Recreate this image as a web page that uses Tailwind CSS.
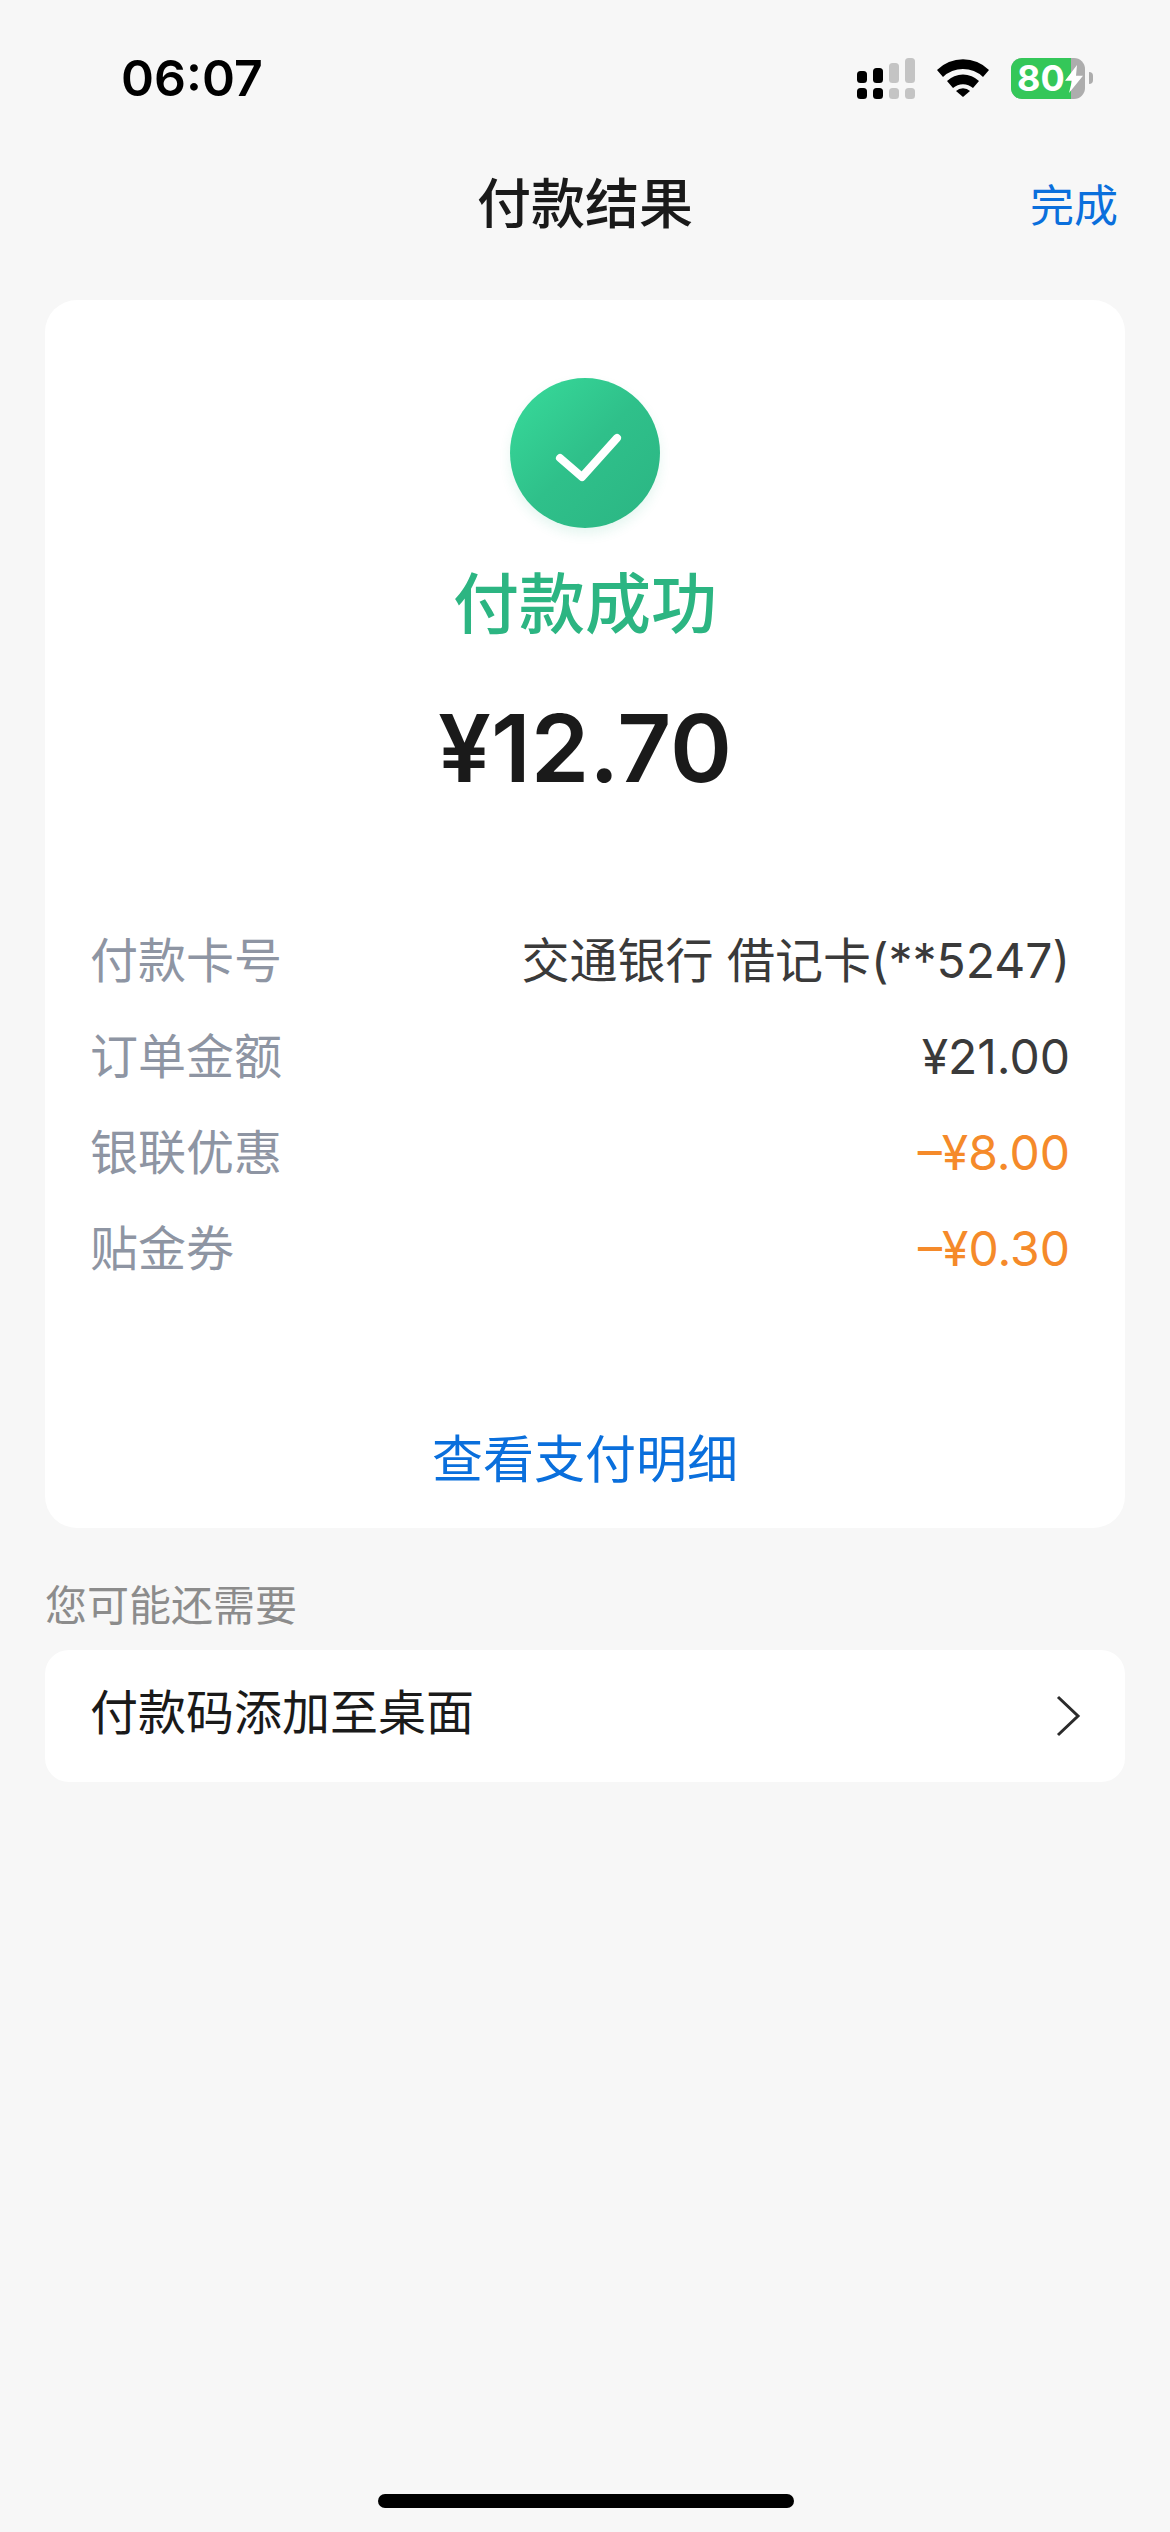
<!DOCTYPE html>
<html lang="zh-CN">
<head>
  <meta charset="UTF-8" />
  <meta name="viewport" content="width=device-width, initial-scale=1.0" />
  <title>付款结果</title>
  <script src="https://cdn.jsdelivr.net/npm/@tailwindcss/browser@4"></script>
</head>
<body class="bg-[#f7f7f7] font-['Inter','Noto_Sans_CJK_SC',sans-serif]">
  <div class="relative w-[1170px] h-[2532px] overflow-hidden">

    <!-- status bar -->
    <div class="h-[156px] pl-[121px] pr-[77px] flex justify-between items-center">
      <span class="text-[50px] leading-[66px] font-semibold text-black">06:07</span>
      <div class="flex items-center gap-[22px]">
        <svg width="58" height="41" viewBox="0 0 58 41" class="block">
          <g fill="#000">
            <rect x="0" y="13" width="10" height="12" rx="3.5" /><rect x="16" y="10" width="10" height="15" rx="3.5" />
            <rect x="0" y="30" width="10" height="11" rx="3.5" /><rect x="16" y="30" width="10" height="11" rx="3.5" />
          </g>
          <g fill="#c4c4c4">
            <rect x="32" y="5" width="10" height="20" rx="3.5" /><rect x="48" y="0" width="10" height="25" rx="3.5" />
            <rect x="32" y="30" width="10" height="11" rx="3.5" /><rect x="48" y="30" width="10" height="11" rx="3.5" />
          </g>
        </svg>
        <svg width="52" height="38" viewBox="0 0 52 38" class="block">
          <path d="M0 11 A37 37 0 0 1 52 11 L46 18 A29 29 0 0 0 6 18 Z" fill="#000" />
          <path d="M10 22 A23 23 0 0 1 42 22 L36 29 A15 15 0 0 0 16 29 Z" fill="#000" />
          <path d="M19 32 A10 10 0 0 1 33 32 L26 38 Z" fill="#000" />
        </svg>
        <div class="flex items-center">
          <div class="relative w-[74px] h-[41px] rounded-[11px] bg-[#adadad]">
            <div class="w-[60px] h-full bg-[#34c759] rounded-l-[11px]"></div>
            <span class="absolute left-[6px] top-0 text-[36px] leading-[41px] font-bold text-white">80</span>
            <svg width="20" height="28" viewBox="0 0 20 34" class="absolute left-[53px] top-[7px]" preserveAspectRatio="none">
              <path d="M13 0 L1 19 H8 L5 34 L19 13 H12 Z" fill="#fff" />
            </svg>
          </div>
          <div class="w-[4px] h-[12px] ml-[4px] bg-[#adadad] rounded-r-full"></div>
        </div>
      </div>
    </div>

    <!-- nav -->
    <div class="relative h-[144px] pt-[11px] flex items-start justify-center">
      <h1 class="text-[54px] leading-[76px] font-medium text-[#1a1a1a]">付款结果</h1>
      <span class="absolute right-[52px] top-[12px] text-[44px] leading-[76px] text-[#0a6fdc]">完成</span>
    </div>

    <!-- result card -->
    <div class="mx-[45px] h-[1228px] bg-white rounded-[32px] flex flex-col items-center">
      <div class="mt-[78px] w-[150px] h-[150px] rounded-full bg-linear-to-br from-[#38dc9b] via-[#2fc08a] to-[#2bb583] shadow-[0_6px_12px_rgba(44,184,131,0.12)]">
        <svg width="150" height="150" viewBox="0 0 150 150" class="block">
          <path d="M50 80 L72 99 L107 60" fill="none" stroke="#fff" stroke-width="8" stroke-linecap="round" stroke-linejoin="round" />
        </svg>
      </div>
      <div class="mt-[28px] text-[66px] leading-[96px] font-medium text-[#2cb582]">付款成功</div>
      <div class="mt-[36px] text-[94px] leading-[120px] font-semibold text-[#1a1a1a]">¥12.70</div>

      <div class="mt-[105px] w-full pl-[45px] pr-[55px] flex flex-col text-[48px] leading-[96px]">
        <div class="flex justify-between"><span class="text-[#8e95a3]">付款卡号</span><span class="text-[#3a3a3a]">交通银行 借记卡(**5247)</span></div>
        <div class="flex justify-between"><span class="text-[#8e95a3]">订单金额</span><span class="text-[#3a3a3a]">¥21.00</span></div>
        <div class="flex justify-between"><span class="text-[#8e95a3]">银联优惠</span><span class="text-[#f58a2a]">–¥8.00</span></div>
        <div class="flex justify-between"><span class="text-[#8e95a3]">贴金券</span><span class="text-[#f58a2a]">–¥0.30</span></div>
      </div>

      <div class="mt-[127px] text-[51px] leading-[72px] text-[#0a6fdc]">查看支付明细</div>
    </div>

    <!-- more -->
    <div class="mt-[48px] ml-[45px] text-[42px] leading-[60px] text-[#8c8c8c]">您可能还需要</div>
    <div class="mt-[14px] mx-[45px] h-[132px] bg-white rounded-[24px] pl-[45px] pr-[44px] flex items-center justify-between">
      <span class="text-[48px] leading-[72px] text-[#1a1a1a] -translate-y-[3px]">付款码添加至桌面</span>
      <svg width="26" height="42" viewBox="0 0 26 42">
        <path d="M3 2 L23 21 L3 40" fill="none" stroke="#2b2b2b" stroke-width="3" />
      </svg>
    </div>

    <!-- home indicator -->
    <div class="absolute left-[378px] bottom-[24px] w-[416px] h-[14px] rounded-full bg-black"></div>
  </div>
</body>
</html>
